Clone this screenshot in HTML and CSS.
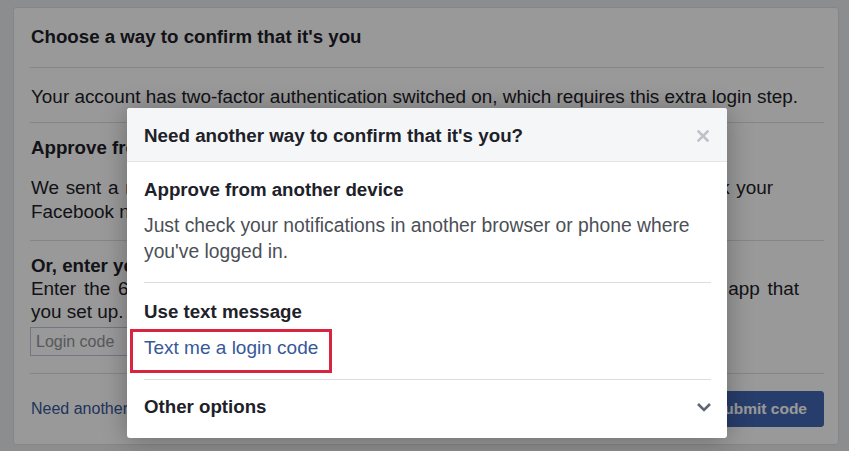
FILE: index.html
```html
<!DOCTYPE html>
<html>
<head>
<meta charset="utf-8">
<link rel="stylesheet" href="styles.css">
</head>
<body>
<div class="page">
  <div class="card">
    <div class="card-head">Choose a way to confirm that it's you</div>
    <div class="card-intro">Your account has two-factor authentication switched on, which requires this extra login step.</div>
    <div class="card-sec approve">
      <div class="sec-title">Approve from another device</div>
      <div class="sec-text w-approve">We sent a notification to your phone. Once it's approved, you can log in, or check your Facebook notifications on another device.</div>
    </div>
    <div class="card-sec code">
      <div class="sec-title">Or, enter your login code</div>
      <div class="sec-text tight w-code">Enter the 6-digit code from the Code Generator or the third-party authentication app that you set up.</div>
      <div class="input">Login code</div>
    </div>
    <div class="card-foot">
      <a class="foot-link">Need another way to confirm that it's you?</a>
      <button class="btn">Submit code</button>
    </div>
  </div>
</div>
<div class="overlay"></div>
<div class="modal">
  <div class="modal-head">
    <span class="modal-title">Need another way to confirm that it's you?</span>
    <svg class="close" width="12" height="12" viewBox="0 0 12 12"><path d="M1.5 1.5 L10.5 10.5 M10.5 1.5 L1.5 10.5" stroke="#bec2c9" stroke-width="2.6" stroke-linecap="square"/></svg>
  </div>
  <div class="modal-body">
    <div class="opt opt1">
      <div class="opt-title">Approve from another device</div>
      <div class="opt-text">Just check your notifications in another browser or phone where you've logged in.</div>
    </div>
    <div class="opt opt2">
      <div class="opt-title">Use text message</div>
      <div class="opt-link"><span class="linktext">Text me a login code<span class="highlight"></span></span></div>
    </div>
    <div class="opt opt3">
      <div class="opt-title">Other options</div>
      <svg class="chev" width="16" height="10" viewBox="0 0 16 10"><path d="M2 2 L8 8 L14 2" fill="none" stroke="#606770" stroke-width="2.6"/></svg>
    </div>
  </div>
</div>
</body>
</html>
```
FILE: styles.css
```css
* { box-sizing: border-box; }
html, body { margin: 0; padding: 0; }
body {
  width: 849px;
  height: 451px;
  overflow: hidden;
  background: #e9ebee;
  font-family: "Liberation Sans", Arial, Helvetica, sans-serif;
  color: #1d2129;
  position: relative;
}
.page { padding: 7px 10px 0 13px; }
.card {
  width: 826px;
  height: 438px;
  background: #fff;
  border: 1px solid #dddfe2;
  border-radius: 3px;
  padding: 0 14px 0 16px;
}
.card-head {
  font-weight: bold;
  font-size: 18.7px;
  line-height: 22px;
  padding: 18px 0 19px 1px;
  border-bottom: 1px solid #dddfe2;
}
.card-intro {
  font-size: 18.9px;
  line-height: 24px;
  padding: 17px 0 13px 1px;
  border-bottom: 1px solid #dddfe2;
  color: #1d2129;
  white-space: nowrap;
}
.card-sec {
  padding: 14px 0 16px 1px;
  border-bottom: 1px solid #dddfe2;
}
.sec-title { font-weight: bold; font-size: 18.7px; line-height: 22px; }
.sec-text { font-size: 18.9px; line-height: 24px; margin-top: 17px; text-align: justify; }
.sec-text.tight { line-height: 23px; margin-top: 0; }
.w-approve { width: 742px; }
.w-code { width: 768px; }
.card-sec.code { padding-bottom: 17px; }
.input {
  margin-top: 4px;
  margin-left: -1px;
  width: 200px;
  height: 29px;
  border: 1px solid #bdc7d8;
  font-size: 16px;
  line-height: 27px;
  padding-left: 5px;
  color: #90949c;
}
.card-foot {
  display: flex;
  align-items: center;
  justify-content: space-between;
  padding: 17px 0 17px 1px;
}
.foot-link { color: #365899; font-size: 16px; }
.btn {
  background: #4267b2;
  border: 1px solid #4267b2;
  color: #fff;
  font-family: inherit;
  font-weight: bold;
  font-size: 15.5px;
  height: 36px;
  padding: 0 16px;
  border-radius: 3px;
}
.overlay {
  position: absolute;
  inset: 0;
  background: rgba(0, 0, 0, 0.4);
}
.modal {
  position: absolute;
  left: 127px;
  top: 108px;
  width: 600px;
  height: 330px;
  background: #fff;
  border-radius: 3px;
  box-shadow: 0 2px 26px rgba(0, 0, 0, .3);
  overflow: hidden;
}
.modal-head {
  height: 54px;
  background: #f5f6f7;
  border-bottom: 1px solid #e5e5e5;
  display: flex;
  align-items: center;
  justify-content: space-between;
  padding: 2px 18px 0 17px;
}
.modal-title { font-weight: bold; font-size: 18.8px; color: #1d2129; }
.modal-body { padding: 0 16px 0 17px; }
.opt { border-bottom: 1px solid #dadde1; }
.opt:last-child { border-bottom: none; }
.opt-title { font-weight: bold; font-size: 18.7px; line-height: 22px; color: #1d2129; }
.opt1 { padding: 17px 0 17px; }
.opt-text { font-size: 19.3px; line-height: 26px; margin-top: 12px; color: #4b4f56; }
.opt2 { padding: 18px 0 18px; }
.opt-link { margin-top: 12px; font-size: 19px; line-height: 26px; }
.linktext { position: relative; color: #365899; }
.highlight {
  position: absolute;
  left: -14px;
  top: -8px;
  width: 202px;
  height: 44px;
  border: 3px solid #d8243f;
}
.opt3 {
  display: flex;
  align-items: center;
  justify-content: space-between;
  padding: 16px 0 19px;
}
.chev { margin-right: -1px; }
```
